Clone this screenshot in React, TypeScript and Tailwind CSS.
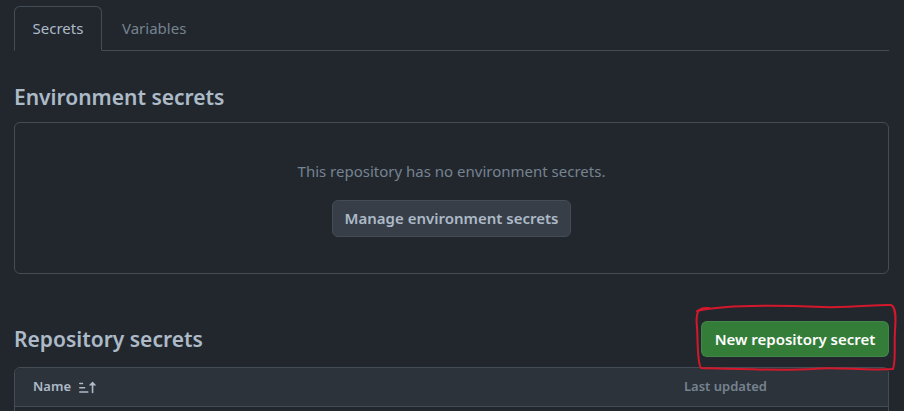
import React from "react";

const font = { fontFamily: '"Noto Sans", "Open Sans", "Liberation Sans", sans-serif' };

const SortAsc = () => (
  <svg viewBox="0 0 16 16" width="17" height="17" fill="currentColor" aria-hidden="true">
    <path d="m12.927 2.573 3 3A.25.25 0 0 1 15.75 6H13.5v6.75a.75.75 0 0 1-1.5 0V6H9.75a.25.25 0 0 1-.177-.427l3-3a.25.25 0 0 1 .354 0ZM0 12.25a.75.75 0 0 1 .75-.75h7.5a.75.75 0 0 1 0 1.5H.75a.75.75 0 0 1-.75-.75Zm0-4a.75.75 0 0 1 .75-.75h4.5a.75.75 0 0 1 0 1.5H.75A.75.75 0 0 1 0 8.25Zm0-4a.75.75 0 0 1 .75-.75h2.5a.75.75 0 0 1 0 1.5H.75A.75.75 0 0 1 0 4.25Z" />
  </svg>
);

// hand-drawn red marker around the button
const Scribble = () => (
  <svg
    className="absolute pointer-events-none"
    style={{ left: -8, top: -20, width: 208, height: 74 }}
    viewBox="0 0 208 74"
    fill="none"
  >
    <path
      d="M4 10 C 30 4, 80 4, 130 6 C 160 7, 185 3, 198 4 C 203 6, 203 16, 202 30 C 201 46, 203 60, 200 68 C 170 70, 140 65, 120 68 C 90 70, 40 68, 8 67 C 4 62, 5 40, 4 26 C 3 18, 4 12, 6 9 C 10 6, 14 7, 16 7"
      stroke="#d3182c"
      strokeWidth="2"
      strokeLinecap="round"
      strokeLinejoin="round"
    />
  </svg>
);

export default function App() {
  return (
    <div className="bg-[#22272e] h-[411px] w-full overflow-hidden pl-[14px] pr-[15px] text-[#adbac7]" style={font}>
      {/* tabs */}
      <div className="pt-[6px] flex border-b border-[#444c56]">
        <div className="-mb-px h-[45px] w-[88px] flex items-center justify-center border border-[#444c56] border-b-[#22272e] rounded-t-md text-[15px] text-[#adbac7]">
          Secrets
        </div>
        <div className="h-[44px] px-[20px] flex items-center text-[15px] text-[#768390]">Variables</div>
      </div>

      <h2 className="mt-[28px] text-[21px] leading-[36px] font-semibold">Environment secrets</h2>

      <div className="mt-[7px] h-[152px] border border-[#444c56] rounded-md flex flex-col items-center pt-[38px]">
        <p className="text-[15px] leading-[21px] text-[#768390]">This repository has no environment secrets.</p>
        <button className="mt-[18px] h-[37px] w-[239px] rounded-md bg-[#373e47] border border-[#444c56] text-[15px] font-semibold text-[#adbac7]">
          Manage environment secrets
        </button>
      </div>

      <div className="mt-[47px] flex items-center justify-between">
        <h2 className="text-[21px] leading-[36px] font-semibold">Repository secrets</h2>
        <div className="relative">
          <button className="h-[36px] w-[188px] rounded-md bg-[#347d39] border border-[#cdd9e5]/10 text-[15px] font-semibold text-white">
            New repository secret
          </button>
          <Scribble />
        </div>
      </div>

      <div className="mt-[10px] border border-[#444c56] rounded-t-md">
        <div className="h-[39px] bg-[#2d333b] rounded-t-md border-b border-[#444c56] flex items-center text-[13px] font-semibold">
          <div className="flex-1 pl-[18px] flex items-center gap-[8px] text-[#adbac7]">
            Name
            <span className="text-[#adbac7]"><SortAsc /></span>
          </div>
          <div className="w-[204px] text-[#768390]">Last updated</div>
        </div>
        <div className="h-[20px]" />
      </div>
    </div>
  );
}
